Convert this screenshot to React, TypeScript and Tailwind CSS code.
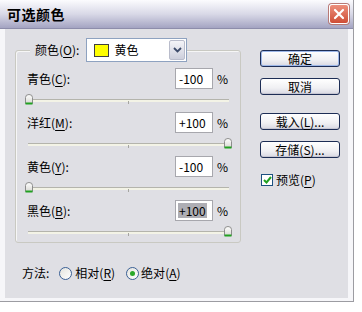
import type { ReactNode } from "react";

type Row = {
  label: string;
  key: string;
  value: string;
  thumb: "left" | "right";
  selected?: boolean;
};

const rows: Row[] = [
  { label: "青色", key: "C", value: "-100", thumb: "left" },
  { label: "洋红", key: "M", value: "+100", thumb: "right" },
  { label: "黄色", key: "Y", value: "-100", thumb: "left" },
  { label: "黑色", key: "B", value: "+100", thumb: "right", selected: true },
];

const Mnemonic = ({ text, k }: { text: string; k: string }) => (
  <span>
    {text}(<span className="underline underline-offset-2">{k}</span>)
  </span>
);

const Thumb = () => (
  <svg width="8" height="11" viewBox="0 0 8 11">
    <defs>
      <linearGradient id="tg" x1="0" y1="0" x2="0" y2="1">
        <stop offset="0" stopColor="#ffffff" />
        <stop offset="1" stopColor="#d9d9d4" />
      </linearGradient>
    </defs>
    <path
      d="M0.5 3.5 Q0.5 0.5 4 0.5 Q7.5 0.5 7.5 3.5 V9.5 H0.5 Z"
      fill="url(#tg)"
      stroke="#8c8c8c"
    />
    <rect x="0.5" y="8.5" width="7" height="2" fill="#21a121" />
  </svg>
);

const Slider = ({ thumb }: { thumb: "left" | "right" }) => (
  <div className="relative -ml-[2px] -mr-[4px] h-[23px]">
    <div className="absolute left-[3px] right-[3px] top-[10px] h-[3px] border-t border-[#b4b4ac] bg-[#f3f3e6]" />
    <div className="absolute left-[103px] top-[12px] h-[3px] w-px bg-[#a5a5a0]" />
    <div className={thumb === "left" ? "absolute left-0 top-[5px] flex" : "absolute right-0 top-[5px] flex"}>
      <Thumb />
    </div>
  </div>
);

const Button = ({ children, primary }: { children: ReactNode; primary?: boolean }) => (
  <div
    className={
      "flex h-[17px] w-[80px] items-center justify-center rounded-[3px] border border-[#1d2d55] bg-[linear-gradient(to_bottom,#ffffff,#f0f0f3_60%,#d8d8e2)] text-[12px] leading-none text-black " +
      (primary ? "shadow-[inset_0_0_0_1px_#9db7e8]" : "shadow-[inset_0_-1px_0_#c6c6d2]")
    }
  >
    {children}
  </div>
);

const Radio = ({ checked }: { checked?: boolean }) => (
  <div className="flex h-[13px] w-[13px] items-center justify-center rounded-full border border-[#3a5f95] bg-[linear-gradient(135deg,#e4e4de,#ffffff)]">
    {checked && <div className="h-[5px] w-[5px] rounded-full bg-[#2aa82a]" />}
  </div>
);

export default function App() {
  return (
    <div className="h-[312px] w-[362px] bg-white font-['Noto_Sans_CJK_SC',sans-serif] text-[12px] text-black">
      <div className="h-[302px] w-[354px] border-b border-r border-[#9c9ca2] bg-[#f6f6f9]">
        <div className="flex h-[29px] items-center border-b border-[#8d8dab] bg-[linear-gradient(to_bottom,#fcfcfe,#d9d9e7_50%,#a4a4c2)] pl-[7px] pr-[4px]">
          <span className="text-[14px] font-bold leading-none tracking-[0.5px]">可选颜色</span>
          <div className="ml-auto flex h-[20px] w-[20px] items-center justify-center rounded-[3px] border border-white bg-[linear-gradient(to_bottom,#ec8f7c,#cf4e36)] shadow-[0_0_0_1px_#b87a76]">
            <svg width="12" height="12" viewBox="0 0 12 12">
              <path d="M2 2 L10 10 M10 2 L2 10" stroke="white" strokeWidth="2.2" strokeLinecap="round" />
            </svg>
          </div>
        </div>

        <div className="mx-[5px] flex h-[269px] bg-[#dfdfe4]">
          <div className="flex flex-col pl-[10px]">
            <div className="mt-[21px] h-[193px] w-[226px] rounded-[3px] border border-[#c9c9c2] shadow-[inset_1px_1px_0_#f6f6f6]">
              <div className="-mt-[13px] ml-[14px] flex h-[24px] items-center">
                <span className="flex h-full items-center bg-[#dfdfe4] pl-[5px] pr-[7px]">
                  <Mnemonic text="颜色" k="O" />:
                </span>
                <div className="flex h-[24px] w-[101px] items-center border border-[#8ea2c0] bg-white">
                  <div className="ml-[7px] h-[13px] w-[15px] border border-[#404040] bg-[#ffff00]" />
                  <span className="ml-[5px]">黄色</span>
                  <div className="ml-auto mr-px flex h-[20px] w-[16px] items-center justify-center rounded-[2px] border border-[#b9bccb] bg-[linear-gradient(to_bottom,#f4f4f8,#cdcfdc)]">
                    <svg width="9" height="6" viewBox="0 0 9 6">
                      <path d="M1 1 L4.5 4.5 L8 1" fill="none" stroke="#3d4b6a" strokeWidth="1.8" />
                    </svg>
                  </div>
                </div>
              </div>

              <div className="mt-[6px] flex flex-col pl-[11px] pr-[12px]">
                {rows.map((row) => (
                  <div key={row.key} className="flex h-[44px] flex-col">
                    <div className="flex h-[21px] items-center">
                      <span className="flex-1">
                        <Mnemonic text={row.label} k={row.key} />:
                      </span>
                      <div className="flex h-[21px] w-[38px] items-center border border-[#a7a7ad] bg-white pl-[2px]">
                        <span className={row.selected ? "bg-[#aeaeb4] px-px leading-[15px]" : "px-px"}>{row.value}</span>
                      </div>
                      <span className="ml-[4px] w-[11px] text-right">%</span>
                    </div>
                    <Slider thumb={row.thumb} />
                  </div>
                ))}
              </div>
            </div>

            <div className="mt-[22px] flex h-[16px] items-center pl-[7px]">
              <span>方法:</span>
              <div className="ml-[10px]">
                <Radio />
              </div>
              <span className="ml-[3px]">
                <Mnemonic text="相对" k="R" />
              </span>
              <div className="ml-[11px]">
                <Radio checked />
              </div>
              <span className="ml-[2px]">
                <Mnemonic text="绝对" k="A" />
              </span>
            </div>
          </div>

          <div className="ml-[19px] flex flex-col pt-[21px]">
            <Button primary>确定</Button>
            <div className="mt-[11px]">
              <Button>取消</Button>
            </div>
            <div className="mt-[18px]">
              <Button>
                <Mnemonic text="载入" k="L" />...
              </Button>
            </div>
            <div className="mt-[11px]">
              <Button>
                <Mnemonic text="存储" k="S" />...
              </Button>
            </div>
            <div className="mt-[14px] flex h-[16px] items-center pl-[1px]">
              <div className="flex h-[12px] w-[12px] items-center justify-center border border-[#1c5180] bg-white">
                <svg width="9" height="8" viewBox="0 0 9 8">
                  <path d="M1 4 L3.5 6.5 L8 1" fill="none" stroke="#21a121" strokeWidth="2" />
                </svg>
              </div>
              <span className="ml-[3px]">
                <Mnemonic text="预览" k="P" />
              </span>
            </div>
          </div>
        </div>
      </div>
    </div>
  );
}
